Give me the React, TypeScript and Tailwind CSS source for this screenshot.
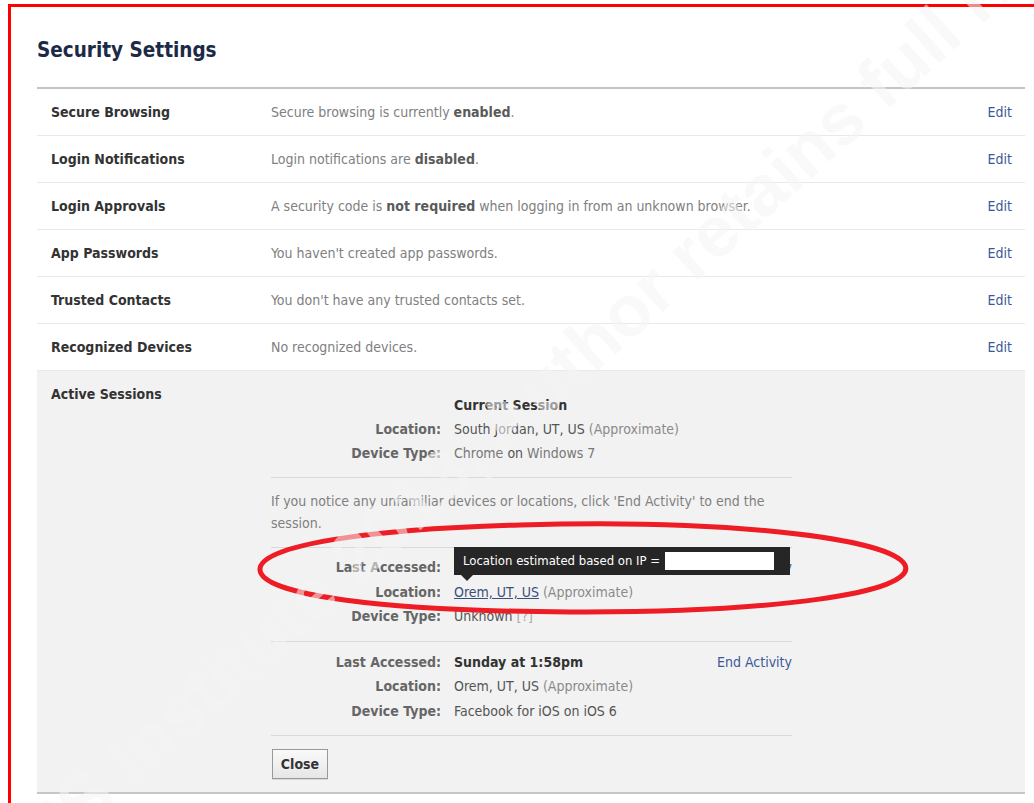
import React from "react";

const FONT = '"DejaVu Sans Condensed", "Liberation Sans", Arial, sans-serif';

type Row = { label: string; desc: React.ReactNode };

const rows: Row[] = [
  {
    label: "Secure Browsing",
    desc: (
      <>
        Secure browsing is currently <b className="font-bold text-[#5a5a5a]">enabled</b>.
      </>
    ),
  },
  {
    label: "Login Notifications",
    desc: (
      <>
        Login notifications are <b className="font-bold text-[#5a5a5a]">disabled</b>.
      </>
    ),
  },
  {
    label: "Login Approvals",
    desc: (
      <>
        A security code is <b className="font-bold text-[#5a5a5a]">not required</b> when logging in from an unknown browser.
      </>
    ),
  },
  { label: "App Passwords", desc: "You haven't created app passwords." },
  { label: "Trusted Contacts", desc: "You don't have any trusted contacts set." },
  { label: "Recognized Devices", desc: "No recognized devices." },
];

function SettingRow({ label, desc }: Row) {
  return (
    <div className="flex h-[47px] items-center border-b border-[#e9e9e9] pl-[14px] pr-[13px] text-[14px]">
      <div className="w-[220px] font-bold text-[#333]">{label}</div>
      <div className="flex-1 text-[#808080]">{desc}</div>
      <a className="text-[#3b5998]">Edit</a>
    </div>
  );
}

function Field({ label, children }: { label: string; children: React.ReactNode }) {
  return (
    <>
      <div className="text-right font-bold text-[#666]">{label}</div>
      <div className="text-[#555]">{children}</div>
    </>
  );
}

function Approx() {
  return <span className="text-[#8a8a8a]"> (Approximate)</span>;
}

export default function App() {
  return (
    <div className="relative h-[803px] w-full overflow-hidden bg-white" style={{ fontFamily: FONT }}>
      <div className="ml-[8px] mt-[4px] h-[799px] border-l-[3px] border-t-[3px] border-[#ff0000] pl-[26px] pr-[9px]">
        <h1 className="h-[80px] pt-[29px] text-[20.5px] font-bold leading-[28px] text-[#1c2a47]">Security Settings</h1>

        <div className="border-t-2 border-[#c4c4c4]">
          {rows.map((r) => (
            <SettingRow key={r.label} {...r} />
          ))}

          {/* expanded Active Sessions panel */}
          <div className="flex border-b-2 border-[#c6c6c6] bg-[#f2f2f2] pl-[14px] text-[14px]">
            <div className="w-[220px] pt-[14px] font-bold leading-[18px] text-[#333]">Active Sessions</div>

            <div className="w-[521px] pb-[13px]">
              <div className="grid grid-cols-[170px_1fr] gap-x-[13px] border-b border-[#d9d9d9] pb-[12px] pt-[22px] leading-[24px]">
                <div />
                <div className="font-bold text-[#333]">Current Session</div>
                <Field label="Location:">
                  South Jordan, UT, US<Approx />
                </Field>
                <Field label="Device Type:">
                  <span className="text-[#777]">Chrome</span> on <span className="text-[#777]">Windows 7</span>
                </Field>
              </div>

              <p className="border-b border-[#d9d9d9] pb-[13px] pt-[12px] leading-[22px] text-[#808080]">
                If you notice any unfamiliar devices or locations, click 'End Activity' to end the session.
              </p>

              <div className="relative grid grid-cols-[170px_1fr_auto] gap-x-[13px] border-b border-[#d9d9d9] pb-[12px] pt-[7px] leading-[24.5px]">
                <div className="text-right font-bold text-[#666]">Last Accessed:</div>
                <div className="font-bold text-[#333]">Yesterday at 9:12am</div>
                <a className="text-[#3b5998]">End Activity</a>
                <div className="text-right font-bold text-[#666]">Location:</div>
                <div className="col-span-2 text-[#555]">
                  <span className="text-[#3b4f7a] underline">Orem, UT, US</span>
                  <Approx />
                </div>
                <div className="text-right font-bold text-[#666]">Device Type:</div>
                <div className="col-span-2 text-[#555]">
                  Unknown <span className="text-[#aaa]">[?]</span>
                </div>

                {/* hover tooltip */}
                <div className="absolute left-[183px] top-[-1px] flex h-[28px] w-[336px] items-center whitespace-nowrap bg-[#262626] pl-[9px] text-[13px] leading-[18px] text-white">
                  <span>Location estimated based on IP =</span>
                  <span className="ml-[5px] inline-block h-[18px] w-[109px] bg-white" />
                  <span className="absolute left-[7px] top-[28px] h-0 w-0 border-l-[6px] border-r-[6px] border-t-[6px] border-l-transparent border-r-transparent border-t-[#262626]" />
                </div>
              </div>

              <div className="grid grid-cols-[170px_1fr_auto] gap-x-[13px] border-b border-[#d9d9d9] pb-[12px] pt-[8px] leading-[24.5px]">
                <div className="text-right font-bold text-[#666]">Last Accessed:</div>
                <div className="font-bold text-[#333]">Sunday at 1:58pm</div>
                <a className="text-[#3b5998]">End Activity</a>
                <div className="text-right font-bold text-[#666]">Location:</div>
                <div className="col-span-2 text-[#555]">
                  Orem, UT, US<Approx />
                </div>
                <div className="text-right font-bold text-[#666]">Device Type:</div>
                <div className="col-span-2 text-[#555]">Facebook for iOS on iOS 6</div>
              </div>

              <button className="ml-[1px] mt-[13px] h-[30px] w-[56px] border border-[#999] bg-gradient-to-b from-[#fafafa] to-[#e6e6e6] text-[14px] font-bold text-[#333] shadow-[0_1px_0_rgba(0,0,0,0.1)]">
                Close
              </button>
            </div>
          </div>
        </div>
      </div>

      {/* hand-drawn red ring around the highlighted session */}
      <svg className="pointer-events-none absolute left-[250px] top-[515px]" width="665" height="108" viewBox="0 0 665 108">
        <path
          d="M 270 10 C 470 4, 640 22, 655 50 C 668 78, 520 98, 320 97 C 130 96, 12 80, 10 55 C 8 30, 120 14, 270 10 Z"
          fill="none"
          stroke="#ee1c24"
          strokeWidth="5"
        />
      </svg>

      {/* faint diagonal watermark */}
      <div
        className="pointer-events-none absolute left-[-100px] top-[965px] whitespace-nowrap text-[72px] font-bold leading-none text-[rgba(244,244,244,0.55)]"
        style={{
          fontFamily: '"Liberation Sans", Arial, sans-serif',
          transformOrigin: "0 0",
          transform: "rotate(-42deg) translateY(-50%)",
        }}
      >
        © SANS Institute 2013, Author retains full rights.
      </div>
    </div>
  );
}
